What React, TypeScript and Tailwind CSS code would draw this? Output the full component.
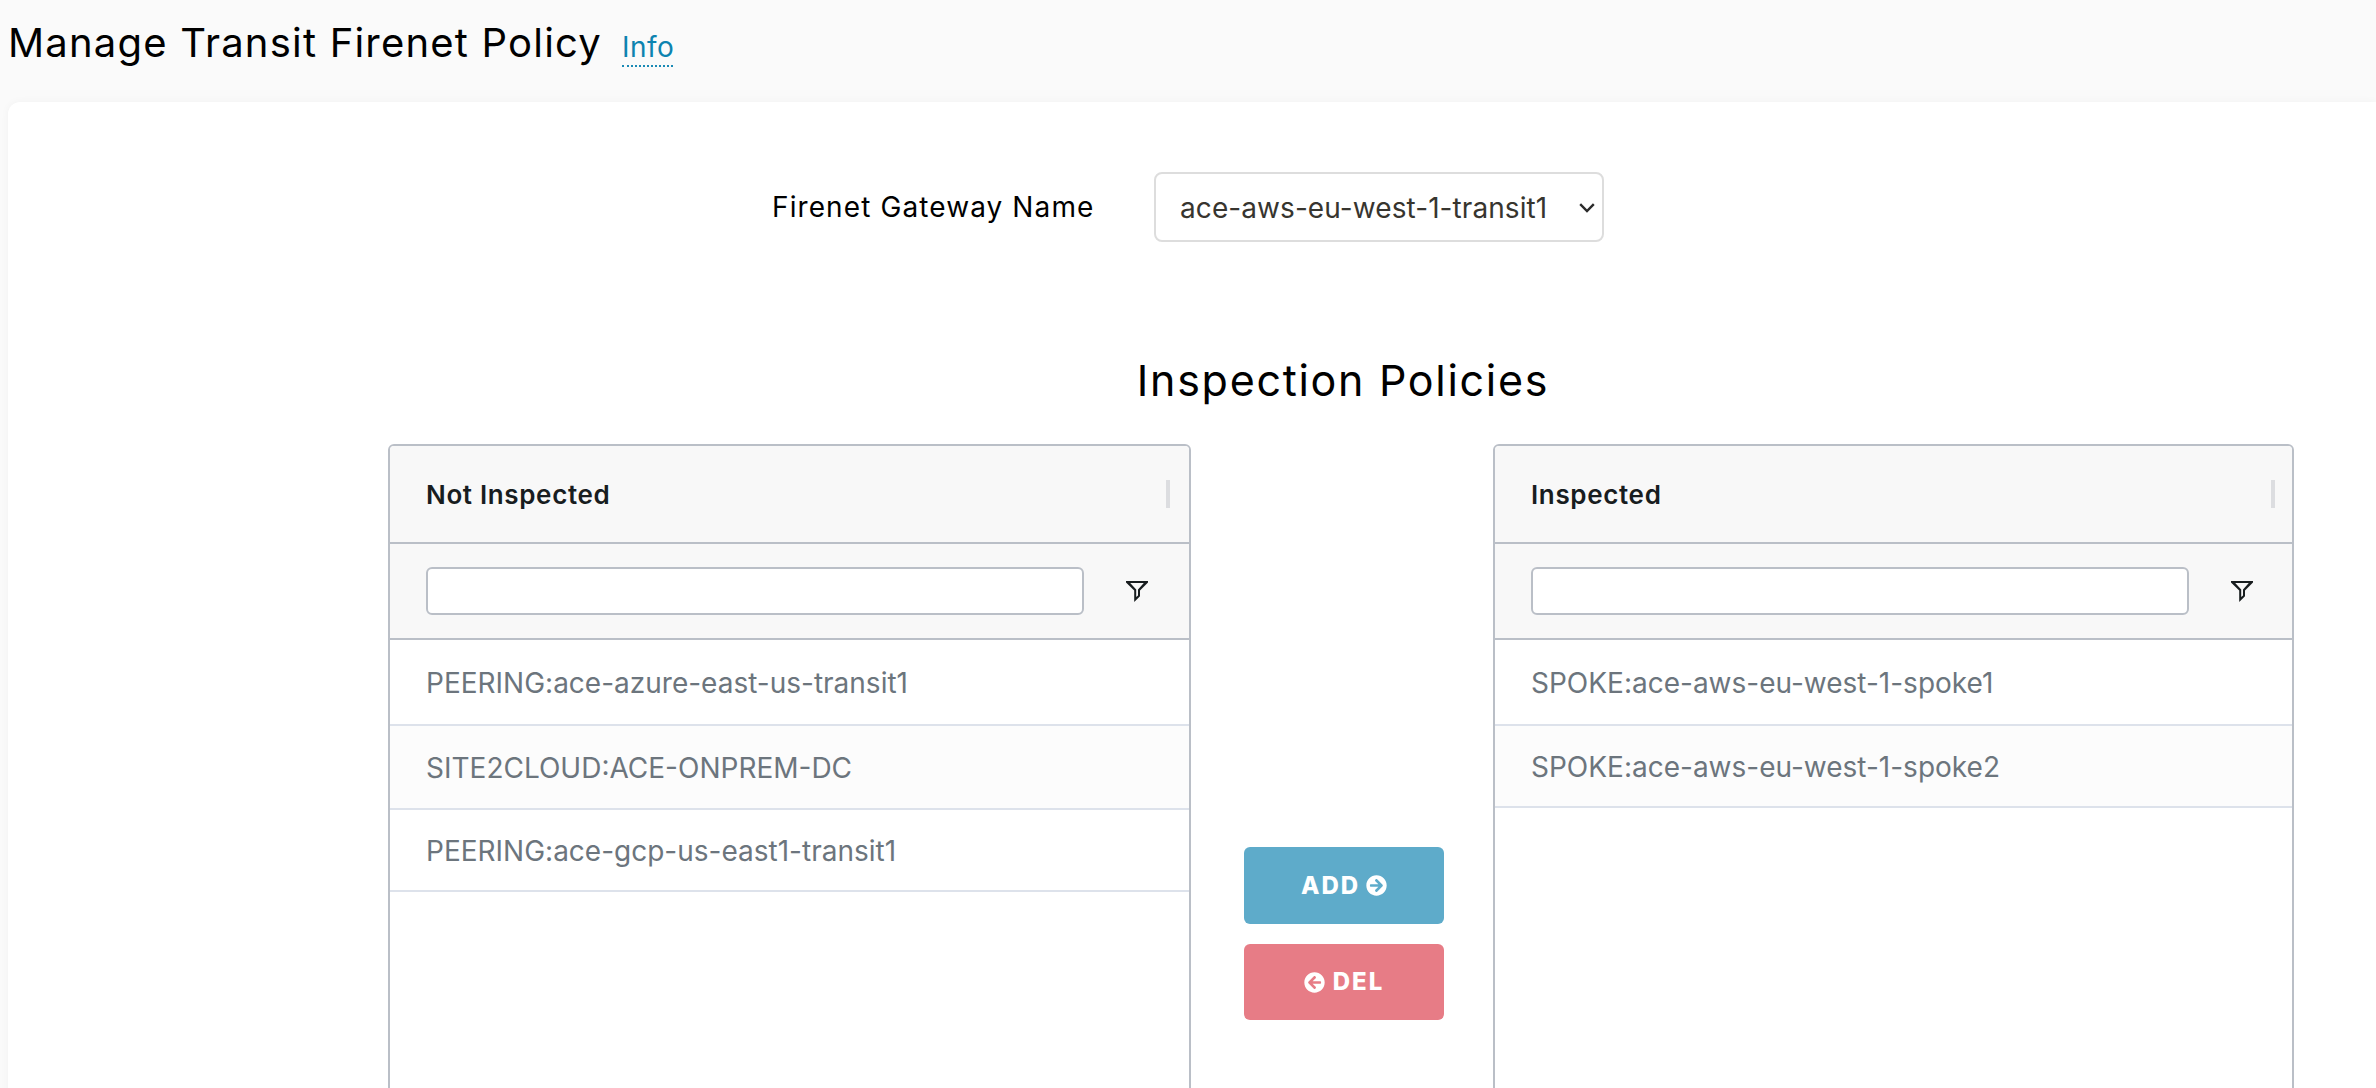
import { FaArrowCircleLeft, FaArrowCircleRight } from "react-icons/fa";

function FilterIcon() {
  return (
    <svg width="22" height="21" viewBox="0 0 22 21" fill="#181d1f" fillRule="evenodd" className="block">
      <path d="M0 0H22V1.4L14 9.4V15.3L8.2 21V9.4L0 1.4ZM4.2 2L10.2 8.4V16.1L12 14.4V8.4L17.8 2Z" />
    </svg>
  );
}

type PolicyTableProps = {
  title: string;
  rows: { name: string; size: string }[];
  className: string;
};

function PolicyTable({ title, rows, className }: PolicyTableProps) {
  return (
    <section
      className={`h-[700px] shrink-0 overflow-hidden rounded-md border-2 border-[#babfc7] bg-white ${className}`}
    >
      <header className="flex h-[98px] items-center border-b-2 border-[#babfc7] bg-[#f8f8f8] pl-9">
        <h3 className="w-[740px] text-[26px] font-semibold tracking-[0.65px] text-[#181d1f]">{title}</h3>
        <span className="h-7 w-1 bg-[#dcdde0]" />
      </header>
      <div className="flex h-24 items-center border-b-2 border-[#babfc7] bg-[#f8f8f8] pl-9">
        <input
          type="text"
          aria-label={`Filter ${title}`}
          className="h-12 w-[658px] rounded-md border-2 border-[#babfc7] bg-white"
        />
        <button type="button" aria-label="Open filter" className="mt-px ml-[42px]">
          <FilterIcon />
        </button>
      </div>
      <ul>
        {rows.map((row) => (
          <li
            key={row.name}
            className={`flex items-center border-b-2 border-[#dde2eb] pt-0.5 pl-9 text-[28px] text-[#6c757d] even:bg-[#fcfcfc] ${row.size}`}
          >
            {row.name}
          </li>
        ))}
      </ul>
    </section>
  );
}

export default function App() {
  return (
    <div className="flex h-screen flex-col overflow-hidden bg-[#fafafa] font-['Inter',sans-serif] whitespace-nowrap text-black">
      <header className="flex h-[102px] shrink-0 items-baseline pt-[19px] pl-2">
        <h1 className="w-[614px] text-[40px] leading-[48px] tracking-[1.2px]">Manage Transit Firenet Policy</h1>
        <a className="w-[51px] border-b-2 border-dotted border-[#1a8ab5] text-[28px] leading-[36px] tracking-[0.5px] text-[#0d83b0]">
          Info
        </a>
      </header>

      <main className="ml-2 flex-1 rounded-tl-xl bg-white pt-[70px] shadow-[0_0_8px_rgba(0,0,0,0.04)]">
        <div className="flex h-[70px] items-center pl-[764px]">
          <label className="w-[382px] text-[28px] tracking-[1.1px]">Firenet Gateway Name</label>
          <div className="flex h-[70px] w-[450px] items-center justify-between rounded-lg border-2 border-[#dddddd] bg-white pr-[7px] pl-6">
            <span className="pt-px text-[28px] tracking-[0.08px] text-[#37352f]">ace-aws-eu-west-1-transit1</span>
            <svg width="16" height="10" viewBox="0 0 16 10" fill="none" stroke="#2b2b2b" strokeWidth="2.4" className="mt-px">
              <path d="M1.2 1.2L8 8L14.8 1.2" />
            </svg>
          </div>
        </div>

        <h2 className="mt-[108px] ml-[380px] w-[1910px] text-center text-[43px] leading-[60px] tracking-[1.7px]">
          Inspection Policies
        </h2>

        <div className="mt-[34px] ml-[380px] flex">
          <PolicyTable
            title="Not Inspected"
            className="w-[803px]"
            rows={[
              { name: "PEERING:ace-azure-east-us-transit1", size: "h-[86px]" },
              { name: "SITE2CLOUD:ACE-ONPREM-DC", size: "h-[84px]" },
              { name: "PEERING:ace-gcp-us-east1-transit1", size: "h-[82px]" },
            ]}
          />
          <div className="mt-[403px] mr-[49px] ml-[53px] flex w-[200px] flex-col gap-5 text-2xl font-extrabold tracking-[1.9px] text-white">
            <button type="button" className="flex h-[77px] items-center justify-center gap-1.5 rounded-md bg-[#5eabca]">
              ADD <FaArrowCircleRight className="size-[21px]" />
            </button>
            <button type="button" className="flex h-[76px] items-center justify-center gap-2 rounded-md bg-[#e77c86]">
              <FaArrowCircleLeft className="size-[21px]" /> DEL
            </button>
          </div>
          <PolicyTable
            title="Inspected"
            className="w-[801px]"
            rows={[
              { name: "SPOKE:ace-aws-eu-west-1-spoke1", size: "h-[86px]" },
              { name: "SPOKE:ace-aws-eu-west-1-spoke2", size: "h-[82px]" },
            ]}
          />
        </div>
      </main>
    </div>
  );
}
